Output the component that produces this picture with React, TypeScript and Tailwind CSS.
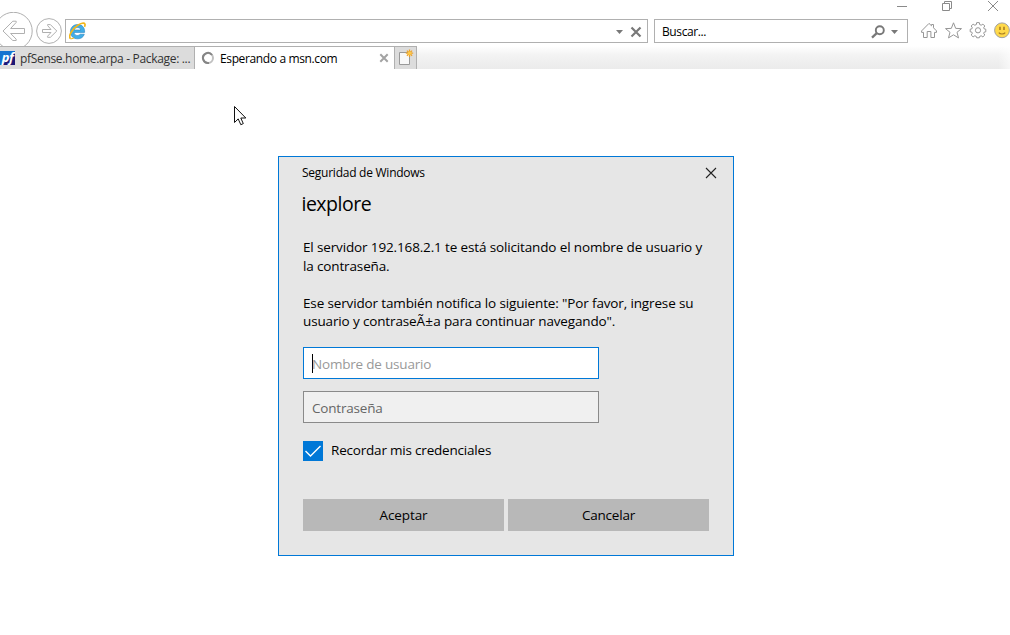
import React from "react";

const stroke = "#8a8a8a";

function BackIcon() {
  return (
    <svg className="absolute left-0 top-3" width="34" height="34" viewBox="0 12 34 34" fill="none" stroke="#b0b0b0">
      <circle cx="13.5" cy="31" r="18.7" fill="#fff" />
      <path d="M3 31 L12.8 21.2 H16.2 V22.4 L10.6 28.5 H24.5 V33.5 H10.6 L16.2 39.2 V40.5 H12.8 Z" />
    </svg>
  );
}

function ForwardIcon() {
  return (
    <svg width="26" height="26" viewBox="36 18 26 26" fill="none" stroke="#b0b0b0">
      <circle cx="49" cy="31" r="12.4" fill="#fff" />
      <path d="M56.8 31 L50.4 24.6 H47.6 V25.5 L51 29.5 H42.5 V32.5 H51 L47.6 36.2 V37.3 H50.4 Z" />
    </svg>
  );
}

function IEIcon() {
  return (
    <svg width="18" height="18" viewBox="0.6 0 18 18" fill="none">
      <path d="M16.2 10.4 H5.6 C5.8 12.7 7.4 13.5 9.2 13.5 C10.4 13.5 11.2 13 11.7 12.2 H15.9 C14.9 15.4 12.4 16.8 9.2 16.8 C4.8 16.8 2 14 2 9.8 C2 5.6 4.9 2.5 9.2 2.5 C13.9 2.5 16.6 5.8 16.2 10.4 Z M5.7 8 H12.3 C12.1 6.3 10.9 5.6 9.1 5.6 C7.3 5.6 6.1 6.4 5.7 8 Z" fill="#42aee8" fillRule="evenodd" stroke="#2382bd" strokeWidth="0.6" />
      <path d="M2.2 16.6 C-0.6 14.8 3.6 6.8 9.4 3.2 C12.6 1.1 15.8 .5 16.5 2 C16.8 2.8 16.6 3.7 16.1 4.8" stroke="#f2b71b" strokeWidth="1.7" />
      <path d="M2.2 16.6 C3.2 17 4.4 16.5 5.6 15.8" stroke="#f2b71b" strokeWidth="1.2" />
    </svg>
  );
}

function Caret() {
  return (
    <svg width="7" height="4" viewBox="0 0 7 4"><path d="M0 0 H7 L3.5 4 Z" fill="#787878" /></svg>
  );
}

function WindowControls() {
  return (
    <div className="flex h-3 shrink-0 justify-end pr-[11px]">
      <svg width="102" height="12" viewBox="897 0 102 12" fill="none" stroke={stroke}>
        <path d="M897 6.5 H907" />
        <path d="M942.5 3.5 H949.5 V10.5 H942.5 Z M944.5 3.5 V1.5 H951.5 V8.5 H949.5" />
        <path d="M988 1 L998 11 M998 1 L988 11" />
      </svg>
    </div>
  );
}

function Toolbar() {
  return (
    <div className="flex h-[34px] shrink-0 items-start pl-9 pt-[7px]">
      <div className="-mt-px h-[26px] w-[29px]"><ForwardIcon /></div>
      <div className="flex h-6 w-[583px] items-center border border-[#b0b0b0] bg-white pl-[3px] pr-[5px]">
        <IEIcon />
        <div className="ml-auto flex items-center gap-[7px] pt-px">
          <Caret />
          <svg width="12" height="12" viewBox="0 0 12 12"><path d="M1.5 1.5 L10.5 10.5 M10.5 1.5 L1.5 10.5" stroke="#787878" strokeWidth="2.2" /></svg>
        </div>
      </div>
      <div className="ml-[6px] flex h-6 w-[254px] items-center border border-[#b0b0b0] bg-white pl-[7px] pr-[9px]">
        <span className="pt-px text-[12px] leading-4 tracking-[-0.4px] text-black">Buscar...</span>
        <div className="ml-auto flex items-center gap-[6px] pt-px">
          <svg width="14" height="14" viewBox="0 0 14 14" fill="none" stroke="#787878">
            <circle cx="8.8" cy="5.2" r="4" strokeWidth="1.9" />
            <path d="M5.8 8.2 L1 12.6" strokeWidth="2.3" />
          </svg>
          <Caret />
        </div>
      </div>
      <svg className="ml-[12px] shrink-0" width="90" height="24" viewBox="920 19 90 24" fill="none" stroke="#969696">
        <path d="M921.6 30.9 L929 23.4 L931.5 25.8 V24.5 H933.5 V27.8 L936.5 30.9 V32.4 H934.5 V37.5 H930.9 V31.5 H927.2 V37.5 H923.5 V32.4 H921.6 Z" />
        <path d="M953.5 22.8 L955.7 28.4 L961.5 28.6 L957 32.3 L958.5 37.9 L953.5 34.8 L948.5 37.9 L950 32.3 L945.5 28.6 L951.3 28.4 Z" />
        <path d="M976.3 24.6 L976.7 22.6 H979.3 L979.7 24.6 L981.2 25.2 L982.9 24.1 L984.8 26 L983.7 27.7 L984.2 28.9 L985.8 29.2 V31.8 L984.2 32.1 L983.7 33.3 L984.8 35 L982.9 36.9 L981.2 35.8 L979.7 36.4 L979.3 37.8 H976.7 L976.3 36.4 L974.8 35.8 L973.1 36.9 L971.2 35 L972.3 33.3 L971.8 32.1 L970.2 31.8 V29.2 L971.8 28.9 L972.3 27.7 L971.2 26 L973.1 24.1 L974.8 25.2 Z" />
        <circle cx="978" cy="30.3" r="2.6" />
        <circle cx="1002" cy="30.3" r="7.4" fill="#ffd94a" stroke="#a0a0a0" />
        <path d="M1000 26.7 V30 M1004 26.7 V30" stroke="#a87d22" strokeWidth="1.6" />
        <path d="M998.8 32.6 C1000 34.4 1004 34.4 1005.2 32.6" stroke="#a87d22" strokeWidth="1.1" />
      </svg>
    </div>
  );
}

function TabBar() {
  return (
    <div className="flex h-[23px] shrink-0 bg-linear-to-b from-white via-[#f3f3f3] via-40% to-[#ebebeb] text-[12px] leading-4">
      <div className="flex w-[195px] items-center border-r border-t border-[#b0b0b0] bg-[#dcdcdc] text-[#333]">
        <div className="flex h-[14px] w-[15px] items-center justify-center bg-linear-to-br from-[#1673d0] from-55% to-[#1d1776] to-60%">
          <span className="-mt-[3px] text-[13px] font-bold italic leading-[14px] tracking-[-0.5px] text-white">pf</span>
        </div>
        <span className="ml-[5px] whitespace-nowrap pt-px tracking-[-0.32px]">pfSense.home.arpa - Package: ...</span>
      </div>
      <div className="flex w-[199px] items-center border-t border-[#b0b0b0] bg-white pl-[6px] pr-[5px] text-black">
        <svg width="14" height="14" viewBox="0 0 14 14" fill="none" strokeWidth="2">
          <circle cx="7" cy="7" r="5" stroke="#c0c0c0" />
          <path d="M11 4 A5 5 0 1 0 8 11.9" stroke="#858585" />
        </svg>
        <span className="ml-[5px] whitespace-nowrap pt-px tracking-[-0.37px]">Esperando a msn.com</span>
        <svg className="ml-auto" width="10" height="10" viewBox="0 0 10 10"><path d="M1.3 1.3 L8.7 8.7 M8.7 1.3 L1.3 8.7" stroke="#a3a3a3" strokeWidth="2" /></svg>
      </div>
      <div className="w-[23px] border border-b-0 border-[#b0b0b0] bg-[#dcdcdc]">
        <svg width="21" height="22" viewBox="395 47 21 22">
          <path d="M399.5 52.5 H409.5 V64.5 H399.5 Z" fill="#f8f8f8" stroke="#999" />
          <path d="M409.5 49.5 V57 M405.8 53.2 H413.2 M406.9 50.6 L412.1 55.8 M412.1 50.6 L406.9 55.8" stroke="#eda32a" strokeWidth="1.3" />
          <circle cx="409.5" cy="53.2" r="1.8" fill="#ffc843" />
        </svg>
      </div>
      <div className="ml-auto w-3 bg-linear-to-r from-transparent to-white/60" />
    </div>
  );
}

function CredentialDialog() {
  return (
    <div className="ml-[278px] mt-[87px] flex h-[400px] w-[456px] flex-col border border-[#0078d7] bg-[#e6e6e6] pl-6 pr-6 text-[13.5px] tracking-[-0.2px] text-black">
      <div className="-ml-px flex h-8 items-center justify-between pr-[2px]">
        <span className="text-[12px] leading-4 tracking-[-0.25px]">Seguridad de Windows</span>
        <svg className="-mr-[10px]" width="12" height="12" viewBox="0 0 12 12"><path d="M1 1 L11 11 M11 1 L1 11" stroke="#222" strokeWidth="1.1" /></svg>
      </div>
      <h1 className="-ml-[1.5px] text-[19.5px] leading-[30px] tracking-[-0.5px]">iexplore</h1>
      <div className="mt-[19px] whitespace-nowrap tracking-[-0.14px]">
        <p className="leading-[19px]">El servidor 192.168.2.1 te está solicitando el nombre de usuario y<br />la contraseña.</p>
        <p className="mt-[18px] leading-[18px]">Ese servidor también notifica lo siguiente: "Por favor, ingrese su<br />usuario y contrase<span className="tracking-[0.2px]">Ã±</span>a para continuar navegando".</p>
      </div>
      <div className="mt-[17px] flex h-8 w-[296px] items-center border border-[#0078d7] bg-white pl-2 text-[#999]">
        <span className="h-[19px] w-px bg-black" />
        <span className="-ml-px pt-[3px]">Nombre de usuario</span>
      </div>
      <div className="mt-3 flex h-8 w-[296px] items-center border border-[#8a8a8a] bg-[#f0f0f0] pl-2 text-[#666]">
        <span className="pt-[3px]">Contraseña</span>
      </div>
      <label className="mt-[18px] flex h-5 items-center gap-2">
        <span className="flex size-5 bg-[#0078d7]">
          <svg width="20" height="20" viewBox="0 0 20 20" fill="none"><path d="M2.5 10 L7.5 15 L17.5 5" stroke="#fff" strokeWidth="1.4" /></svg>
        </span>
        <span className="pb-[2px]">Recordar mis credenciales</span>
      </label>
      <div className="mt-[38px] flex gap-1">
        <button className="h-8 w-[201px] bg-[#b8b8b8] tracking-[-0.1px]">Aceptar</button>
        <button className="h-8 w-[201px] bg-[#b8b8b8]">Cancelar</button>
      </div>
    </div>
  );
}

export default function App() {
  return (
    <div className="relative flex h-[635px] w-[1010px] flex-col overflow-hidden bg-white font-['Open_Sans','Noto_Sans',sans-serif]">
      <WindowControls />
      <Toolbar />
      <BackIcon />
      <TabBar />
      <CredentialDialog />
      <svg className="absolute left-[234px] top-[106px]" width="13" height="20" viewBox="0 0 13 20">
        <path d="M.5 .5 V16.5 L4.2 12.9 L6.8 18.7 L9.3 17.6 L6.8 12 H11.8 Z" fill="#fff" stroke="#111" />
      </svg>
    </div>
  );
}
